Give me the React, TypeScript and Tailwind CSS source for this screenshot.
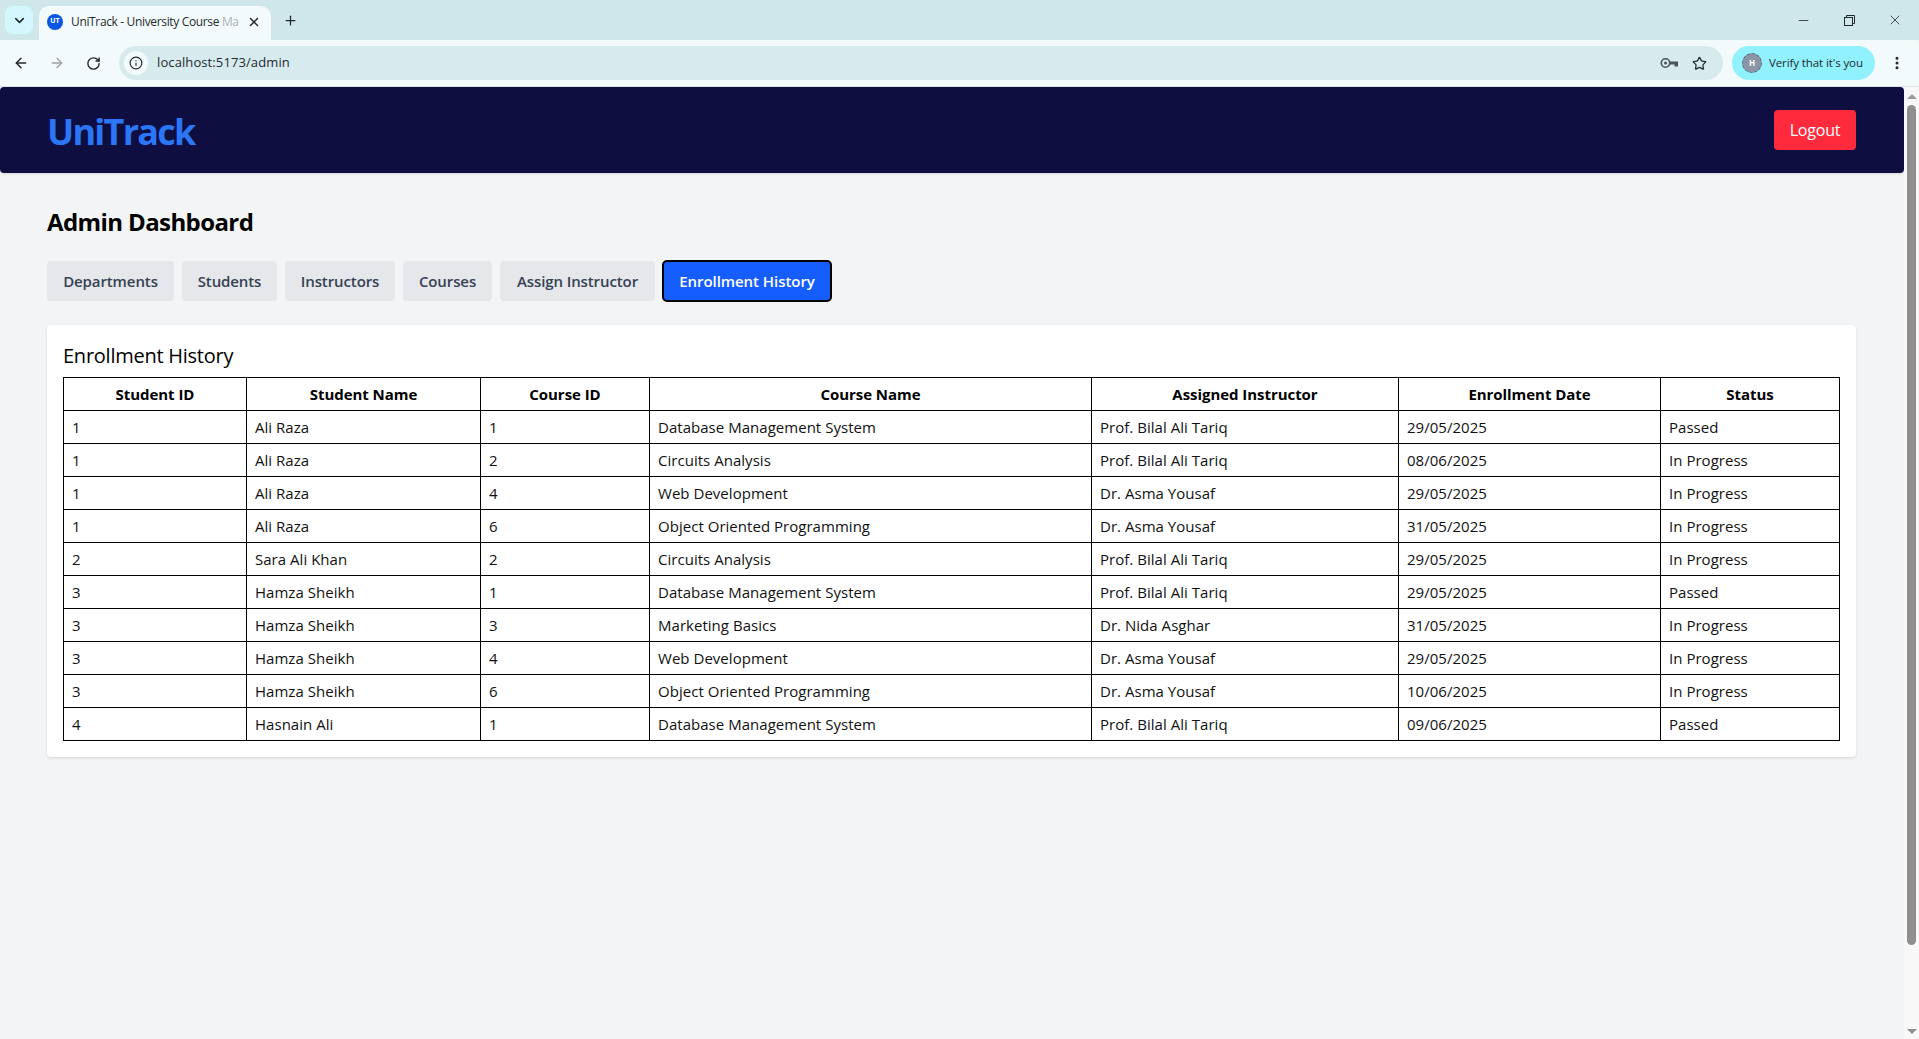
import { ArrowLeft, ArrowRight, ChevronDown, Info, MoreVertical, Minus, Plus, RotateCw, Star, X } from 'lucide-react';

const tabs = [
  { label: 'Departments', width: 'w-[127px]' },
  { label: 'Students', width: 'w-[95px]' },
  { label: 'Instructors', width: 'w-[110px]' },
  { label: 'Courses', width: 'w-[89px]' },
  { label: 'Assign Instructor', width: 'w-[155px]' },
];

const columns = [
  { title: 'Student ID', width: 'w-[183px]' },
  { title: 'Student Name', width: 'w-[234px]' },
  { title: 'Course ID', width: 'w-[169px]' },
  { title: 'Course Name', width: 'w-[442px]' },
  { title: 'Assigned Instructor', width: 'w-[307px]' },
  { title: 'Enrollment Date', width: 'w-[262px]' },
  { title: 'Status', width: 'w-[179px]' },
];

const rows = [
  ['1', 'Ali Raza', '1', 'Database Management System', 'Prof. Bilal Ali Tariq', '29/05/2025', 'Passed'],
  ['1', 'Ali Raza', '2', 'Circuits Analysis', 'Prof. Bilal Ali Tariq', '08/06/2025', 'In Progress'],
  ['1', 'Ali Raza', '4', 'Web Development', 'Dr. Asma Yousaf', '29/05/2025', 'In Progress'],
  ['1', 'Ali Raza', '6', 'Object Oriented Programming', 'Dr. Asma Yousaf', '31/05/2025', 'In Progress'],
  ['2', 'Sara Ali Khan', '2', 'Circuits Analysis', 'Prof. Bilal Ali Tariq', '29/05/2025', 'In Progress'],
  ['3', 'Hamza Sheikh', '1', 'Database Management System', 'Prof. Bilal Ali Tariq', '29/05/2025', 'Passed'],
  ['3', 'Hamza Sheikh', '3', 'Marketing Basics', 'Dr. Nida Asghar', '31/05/2025', 'In Progress'],
  ['3', 'Hamza Sheikh', '4', 'Web Development', 'Dr. Asma Yousaf', '29/05/2025', 'In Progress'],
  ['3', 'Hamza Sheikh', '6', 'Object Oriented Programming', 'Dr. Asma Yousaf', '10/06/2025', 'In Progress'],
  ['4', 'Hasnain Ali', '1', 'Database Management System', 'Prof. Bilal Ali Tariq', '09/06/2025', 'Passed'],
];

function KeyIcon() {
  return (
    <svg width="19" height="12" viewBox="0 0 19 12" fill="none" className="ml-auto text-[#4a5558]">
      <circle cx="5.5" cy="6" r="4.2" stroke="currentColor" strokeWidth="1.6" />
      <circle cx="5.5" cy="6" r="1.5" fill="currentColor" />
      <path d="M10 4.5H18V9.5H14.5V7.5H10" fill="currentColor" />
    </svg>
  );
}

function BrowserChrome() {
  return (
    <div className="font-['Open_Sans',sans-serif] text-[#1f2a2e]">
      {/* Tab strip */}
      <div className="h-10 bg-[#cfe6eb] flex items-end pl-[5px]">
        <div className="w-7 h-7 mb-[6px] bg-[#d4f6fd] rounded-lg flex items-center justify-center">
          <ChevronDown size={15} strokeWidth={2.5} />
        </div>
        <div className="ml-[6px] w-[232px] h-[34px] bg-[#f3fafb] rounded-t-[10px] flex items-center pl-2 pb-[3px]">
          <div className="w-4 h-4 rounded-full bg-[#0b57e3] text-white text-[7px] font-bold flex items-center justify-center">UT</div>
          <span className="ml-2 text-[12px] w-[172px] whitespace-nowrap tracking-[-0.35px]">
            UniTrack - University Course <span className="text-[#a8b2b5]">Ma</span>
          </span>
          <X size={14} strokeWidth={2.5} className="ml-[4px]" />
        </div>
        <Plus size={15} strokeWidth={2} className="ml-[12px] mb-[12px]" />
        <div className="ml-auto flex items-center h-10 pr-[1px]">
          <div className="w-[46px] flex justify-center"><Minus size={15} strokeWidth={1.3} /></div>
          <div className="w-[46px] flex justify-center">
            <svg width="11" height="11" viewBox="0 0 11 11" fill="none" stroke="currentColor">
              <rect x="0.5" y="2.5" width="8" height="8" />
              <path d="M2.5 2.5V0.5H10.5V8.5H8.5" />
            </svg>
          </div>
          <div className="w-[46px] flex justify-center"><X size={16} strokeWidth={1.2} /></div>
        </div>
      </div>
      {/* Toolbar */}
      <div className="h-[47px] bg-[#f3fafb] rounded-tr-lg flex items-center pl-[13px] pr-[14px] border-b border-[#dfe6e8]">
        <ArrowLeft size={16} strokeWidth={2.2} />
        <ArrowRight size={16} strokeWidth={2} className="ml-[20px] text-[#9aa5a8]" />
        <RotateCw size={15} strokeWidth={2.2} className="ml-[21px]" />
        <div className="ml-[18px] flex-1 h-[34px] rounded-full bg-[#d7eaee] flex items-center pl-[5px] pr-[16px]">
          <div className="w-6 h-6 rounded-full bg-[#f3fafb] flex items-center justify-center">
            <Info size={14} strokeWidth={2} />
          </div>
          <span className="ml-[9px] text-[13px] tracking-[0.1px]">localhost:5173/admin</span>
          <KeyIcon />
          <Star size={15} strokeWidth={2} className="ml-[13px]" />
        </div>
        <div className="ml-[9px] w-[143px] h-[34px] rounded-full bg-[#91f1fd] flex items-center pl-[10px]">
          <div className="w-[20px] h-[20px] rounded-full bg-[#8a95a5] border border-dashed border-[#4c6b78] text-white text-[8px] font-bold flex items-center justify-center">H</div>
          <span className="ml-[7px] text-[11.5px] tracking-[-0.1px] whitespace-nowrap">Verify that it's you</span>
        </div>
        <MoreVertical size={16} strokeWidth={2.5} className="ml-[14px]" />
      </div>
    </div>
  );
}

function Scrollbar() {
  return (
    <div className="w-[15px] bg-[#f8f8f8] flex flex-col items-center shrink-0">
      <div className="mt-[7px] w-0 h-0 border-x-[5px] border-x-transparent border-b-[5px] border-b-[#9a9a9a]" />
      <div className="mt-[6px] w-[9px] h-[840px] bg-[#8f8f8f] rounded-full" />
      <div className="mt-auto mb-[5px] w-0 h-0 border-x-[5px] border-x-transparent border-t-[5px] border-t-[#8f8f8f]" />
    </div>
  );
}

export default function App() {
  return (
    <div className="h-[1039px] overflow-hidden flex flex-col bg-[#f3f4f6]">
      <BrowserChrome />
      <div className="flex-1 flex min-h-0">
        <div className="flex-1 min-w-0 font-['Open_Sans',sans-serif]">
          {/* Navbar */}
          <header className="h-[86px] bg-[#0f0e40] rounded-[4px] flex items-center justify-between pl-[47px] pr-[48px] shadow-sm">
            <span className="text-[36px] font-bold text-[#2b76f6] tracking-[-1.75px] mt-[3px]">UniTrack</span>
            <button className="w-[82px] h-10 bg-[#ff2b3d] text-white text-[16px] tracking-[-0.2px] rounded-[4px]">Logout</button>
          </header>

          <main className="pl-[47px] pr-[48px]">
            <h1 className="mt-[33px] text-[24px] leading-8 font-bold text-black tracking-[-0.6px]">Admin Dashboard</h1>

            <div className="mt-[22px] flex gap-2 h-[42px] items-center">
              {tabs.map(tab => (
                <button
                  key={tab.label}
                  className={`${tab.width} h-10 bg-[#e5e7eb] text-[#364153] text-[15px] font-semibold rounded-[4px] tracking-[-0.1px]`}
                >
                  {tab.label}
                </button>
              ))}
              <button className="-ml-[1px] w-[170px] h-[42px] bg-[#155dfc] text-white text-[15px] font-semibold rounded-[5px] border-2 border-black tracking-[-0.05px]">
                Enrollment History
              </button>
            </div>

            {/* Enrollment card */}
            <section className="mt-[23px] bg-white rounded-[4px] shadow p-4">
              <h2 className="text-[20px] leading-7 text-black font-medium tracking-[-0.25px] mb-2 pt-[1px] h-7">Enrollment History</h2>
              <table className="w-[1776px] table-fixed border-collapse text-[15px] text-[#111] tracking-[0.03px]">
                <colgroup>
                  {columns.map(c => (
                    <col key={c.title} className={c.width} />
                  ))}
                </colgroup>
                <thead>
                  <tr className="h-[33px]">
                    {columns.map(c => (
                      <th key={c.title} className="border border-black px-2 py-0 font-bold tracking-[-0.05px] text-black text-center">
                        {c.title}
                      </th>
                    ))}
                  </tr>
                </thead>
                <tbody>
                  {rows.map((row, i) => (
                    <tr key={i} className="h-[33px]">
                      {row.map((cell, j) => (
                        <td key={j} className="border border-black px-2 py-0 text-left">
                          {cell}
                        </td>
                      ))}
                    </tr>
                  ))}
                </tbody>
              </table>
            </section>
          </main>
        </div>
        <Scrollbar />
      </div>
    </div>
  );
}
